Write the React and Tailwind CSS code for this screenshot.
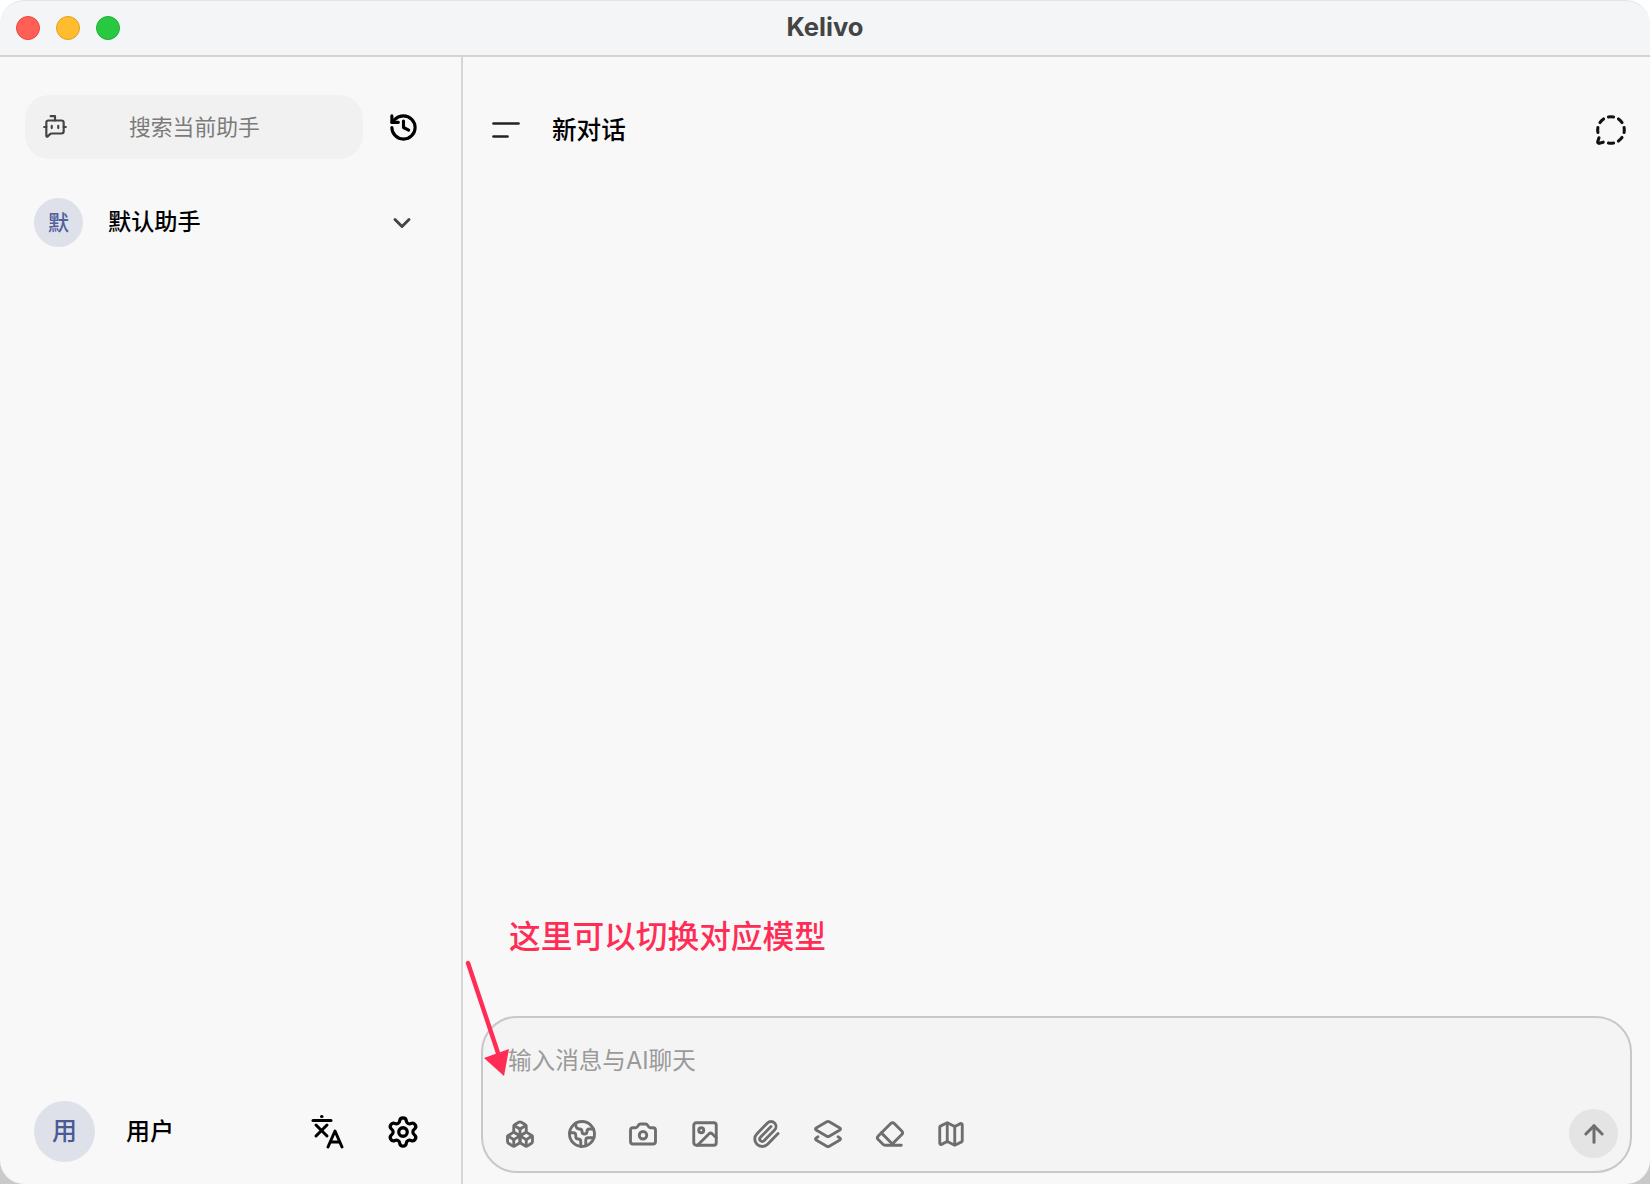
import {
  ArrowUp,
  BotMessageSquare,
  Boxes,
  Camera,
  ChevronDown,
  Earth,
  Eraser,
  History,
  Image,
  Layers2,
  Map,
  MessageCircleDashed,
  Paperclip,
  Settings,
} from "lucide-react";

const font = "[font-family:Inter,'Noto_Sans_CJK_SC',sans-serif]";

const tools = [Boxes, Earth, Camera, Image, Paperclip, Layers2, Eraser, Map];

const TranslateIcon = () => (
  <svg width="36" height="36" viewBox="0 0 36 36" fill="none" stroke="#000" strokeWidth="3" strokeLinecap="round" strokeLinejoin="round">
    <path d="M3 6.5h18" />
    <path d="M11.5 2.5h.5" />
    <path d="M6 11l11 11" />
    <path d="M17 11 6 22" />
    <path d="M18 33l7-16 7 16" />
    <path d="M21 28h8" />
  </svg>
);

const Sidebar = () => (
  <aside className="w-[463px] shrink-0 border-r-2 border-[#d6d6d6] flex flex-col justify-between pl-[25px] pr-[25px] pt-[38px] pb-[22px]">
    <div>
      <div className="flex items-center">
        <div className="w-[338px] h-[64px] rounded-[24px] bg-[#f1f1f1] flex items-center pl-[17px]">
          <BotMessageSquare size={26} strokeWidth={2} color="#444" />
          <span className="ml-[61px] text-[21.8px] text-[#7b7b7b]">搜索当前助手</span>
        </div>
        <button className="ml-[25px]">
          <History size={31} strokeWidth={2.4} color="#000" />
        </button>
      </div>
      <div className="flex items-center mt-[39px] pl-[9px]">
        <div className="w-[49px] h-[49px] rounded-full bg-[#dee1ea] flex items-center justify-center text-[21px] font-medium text-[#50609c]">
          默
        </div>
        <span className="ml-[25px] text-[23.2px] font-medium text-black">默认助手</span>
        <ChevronDown className="ml-auto mr-[20px]" size={28} strokeWidth={2.5} color="#444" />
      </div>
    </div>
    <div className="flex items-center pl-[9px]">
      <div className="w-[61px] h-[61px] rounded-full bg-[#dee1ea] flex items-center justify-center text-[25px] font-medium text-[#4a5a94]">
        用
      </div>
      <span className="ml-[31px] text-[24px] font-medium text-black">用户</span>
      <div className="ml-auto flex items-center gap-[40px] mr-[16px]">
        <TranslateIcon />
        <Settings size={34} strokeWidth={2.3} color="#000" />
      </div>
    </div>
  </aside>
);

const Composer = () => (
  <div className="mt-auto mx-[18px] mb-[11px] h-[157px] rounded-[36px] border-2 border-[#c8c8c8] bg-[#f4f4f4] flex flex-col px-[20px]">
    <div className="pt-[28px] pl-[5px] text-[23.6px] leading-[30px] text-[#9a9a9a]">输入消息与AI聊天</div>
    <div className="mt-auto mb-[13px] flex items-center">
      <div className="flex items-center gap-[31.6px] pl-[2px]">
        {tools.map((Icon, i) => (
          <Icon key={i} size={30} strokeWidth={2.3} color="#6e6e6e" />
        ))}
      </div>
      <button className="ml-auto mr-[-8px] w-[49px] h-[49px] rounded-full bg-[#e4e4e4] flex items-center justify-center">
        <ArrowUp size={28} strokeWidth={2.6} color="#6e6e6e" />
      </button>
    </div>
  </div>
);

export default function App() {
  return (
    <div className={`w-[1650px] h-[1184px] bg-linear-to-b from-white via-white to-[#c9c9c9] overflow-hidden ${font}`}>
      <div className="relative w-full h-full rounded-[24px] bg-[#f8f8f8] flex flex-col overflow-hidden">
        <header className="h-[57px] shrink-0 rounded-t-[24px] bg-[#f3f5f6] border-t border-b-2 border-t-[#e4e4e4] border-b-[#d4d4d4] flex items-center relative">
          <div className="flex items-center gap-[16px] pl-[16px]">
            <span className="w-[24px] h-[24px] rounded-full bg-[#ff5f57] border border-[#e5483f]" />
            <span className="w-[24px] h-[24px] rounded-full bg-[#febc2e] border border-[#e0a020]" />
            <span className="w-[24px] h-[24px] rounded-full bg-[#28c840] border border-[#1fae34]" />
          </div>
          <div className="absolute inset-0 pb-[2px] flex items-center justify-center text-[25.6px] font-bold text-[#444]">Kelivo</div>
        </header>
        <div className="flex-1 flex min-h-0">
          <Sidebar />
          <main className="flex-1 flex flex-col relative min-w-0">
            <div className="flex items-center pt-[55px] pl-[29px] pr-[23px]">
              <svg width="28" height="18" viewBox="0 0 28 18" fill="none" stroke="#222" strokeWidth="2.6" strokeLinecap="round">
                <path d="M1.5 2.5h25" />
                <path d="M1.5 15.5h14" />
              </svg>
              <span className="ml-[32px] text-[24.6px] font-medium text-black">新对话</span>
              <MessageCircleDashed className="ml-auto" size={32} strokeWidth={2.3} color="#111" />
            </div>
            <Composer />
            <div className="absolute left-[46px] top-[856px] text-[31.7px] leading-[48px] font-medium text-[#ff2d55]">
              这里可以切换对应模型
            </div>
            <svg className="absolute left-0 top-[900px]" width="60" height="140" viewBox="0 0 60 140" fill="none">
              <path d="M5 6 35 96" stroke="#ff2d55" strokeWidth="4.4" strokeLinecap="round" />
              <path d="M21 101 46 92 41 119z" fill="#ff2d55" />
            </svg>
          </main>
        </div>
      </div>
    </div>
  );
}
